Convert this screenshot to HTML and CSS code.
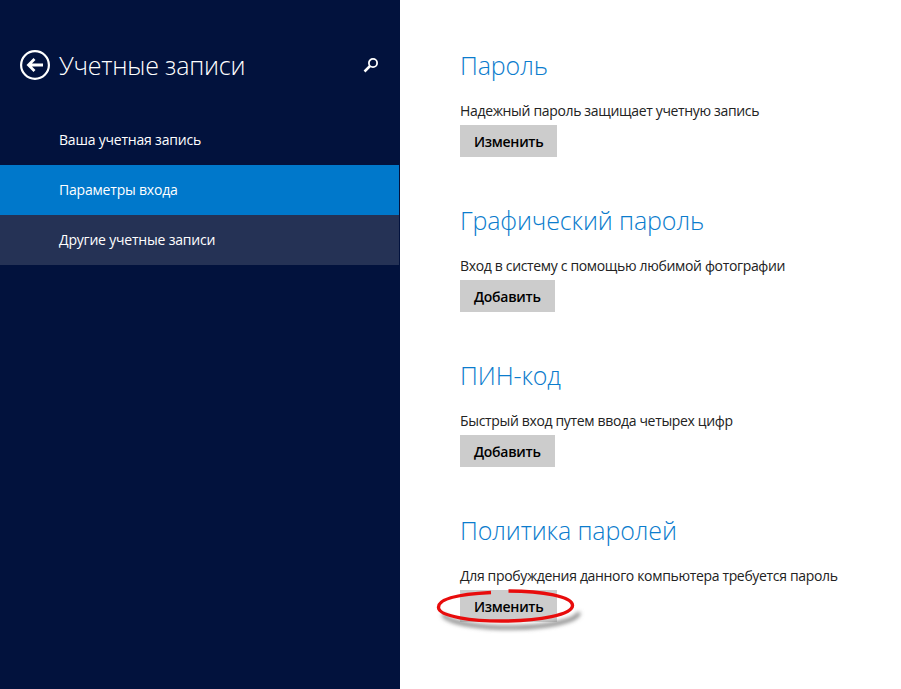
FILE: index.html
```html
<!DOCTYPE html>
<html lang="ru">
<head>
<meta charset="utf-8">
<title>Учетные записи</title>
<link rel="stylesheet" href="styles.css">
</head>
<body>
<div class="app">
  <aside class="sidebar">
    <header class="side-head">
      <svg class="back" width="30" height="30" viewBox="0 0 30 30" aria-hidden="true">
        <circle cx="15" cy="15" r="13.9" fill="none" stroke="#fff" stroke-width="2.2"/>
        <path d="M23 15H9M14.500 9L8.500 15l6 6" fill="none" stroke="#fff" stroke-width="2.800"/>
      </svg>
      <h1 class="side-title">Учетные записи</h1>
      <svg class="search" width="16" height="16" viewBox="0 0 16 16" aria-hidden="true">
        <circle cx="10" cy="6" r="4.100" fill="none" stroke="#fff" stroke-width="1.800"/>
        <path d="M7 9L1.500 14.500" fill="none" stroke="#fff" stroke-width="2.500"/>
      </svg>
    </header>
    <nav class="nav">
      <a class="nav-item">Ваша учетная запись</a>
      <a class="nav-item active">Параметры входа</a>
      <a class="nav-item hover">Другие учетные записи</a>
    </nav>
  </aside>
  <main class="content">
    <section class="group">
      <h2 class="group-title">Пароль</h2>
      <p class="group-text">Надежный пароль защищает учетную запись</p>
      <button class="btn">Изменить</button>
    </section>
    <section class="group">
      <h2 class="group-title">Графический пароль</h2>
      <p class="group-text">Вход в систему с помощью любимой фотографии</p>
      <button class="btn">Добавить</button>
    </section>
    <section class="group">
      <h2 class="group-title">ПИН-код</h2>
      <p class="group-text">Быстрый вход путем ввода четырех цифр</p>
      <button class="btn">Добавить</button>
    </section>
    <section class="group">
      <h2 class="group-title">Политика паролей</h2>
      <p class="group-text">Для пробуждения данного компьютера требуется пароль</p>
      <div class="btn-wrap">
        <button class="btn">Изменить</button>
        <svg class="mark" width="156" height="50" viewBox="0 0 156 50" aria-hidden="true">
          <defs>
            <filter id="soft" x="-10%" y="-30%" width="120%" height="170%">
              <feGaussianBlur stdDeviation="2.200"/>
            </filter>
          </defs>
          <path d="M6 27C10 37 50 41 78 40.500c30-.5 62-6 64-15" transform="translate(2 3)" fill="none" stroke="#777" stroke-width="3.500" filter="url(#soft)"/>
          <path d="M56 8.500C28 10 3 14 3.500 23.500c.5 9 34 14 68 13.500 32-.5 66-6 66-15.500 0-9-30-14.500-64-14.500" fill="none" stroke="#e80c0c" stroke-width="3.400"/>
        </svg>
      </div>
    </section>
  </main>
</div>
</body>
</html>
```
FILE: styles.css
```css
* { box-sizing: border-box; }
html, body { margin: 0; padding: 0; height: 100%; background: #fff; }
body { font-family: "Open Sans", "Noto Sans", sans-serif; overflow: hidden; }
.app { display: flex; width: 901px; height: 689px; }
.sidebar { width: 400px; flex: none; background: #02123d; padding-right: 1px; }
.side-head { display: flex; align-items: flex-start; height: 115px; padding: 50px 20px 0 20px; }
.back { flex: none; margin-right: 9px; }
.side-title { flex: 1; margin: -1px 0 0; font-size: 25px; line-height: 32px; font-weight: 300; color: #fff; letter-spacing: -.2px; }
.search { flex: none; margin-top: 7px; }
.nav { display: flex; flex-direction: column; }
.nav-item { display: flex; align-items: center; height: 50px; padding: 0 0 2px 59px; font-size: 14px; color: #fff; letter-spacing: -.2px; }
.active { background: #0078cb; }
.hover { background: #253255; }
.content { flex: 1; padding: 48px 0 0 60px; }
.group { height: 155px; }
.group-title { margin: 0 0 19px; font-size: 25px; line-height: 34px; font-weight: 300; color: #0b7ccd; letter-spacing: -.12px; }
.group-text { margin: 0 0 4px; font-size: 14px; line-height: 20px; color: #222; letter-spacing: -.34px; }
.btn { display: block; border: 0; border-radius: 0; padding: 2px 14px 0; height: 32px; background: #ccc; color: #000; font: 600 14px/30px "Open Sans", "Noto Sans", sans-serif; letter-spacing: -.28px; }
.btn-wrap { position: relative; width: max-content; }
.mark { position: absolute; left: -25px; top: -6px; }
```
